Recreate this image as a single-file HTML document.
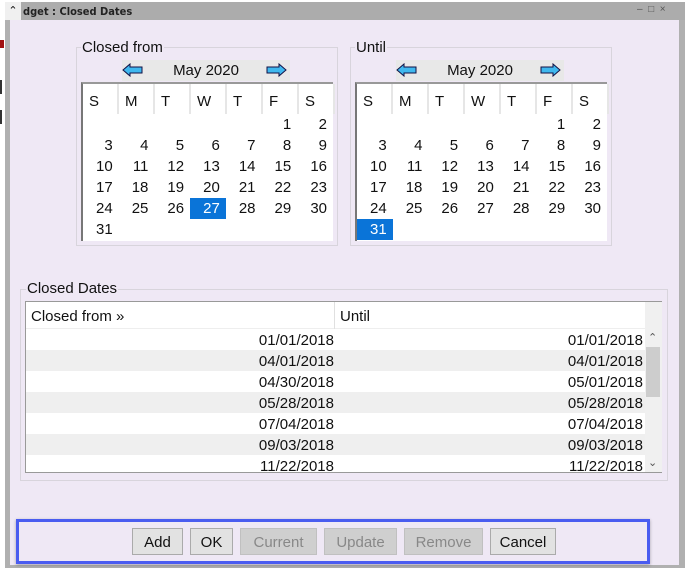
<!DOCTYPE html>
<html><head><style>
*{margin:0;padding:0;box-sizing:border-box}
body{width:687px;height:571px;background:#fff;position:relative;overflow:hidden;font-family:"Liberation Sans","DejaVu Sans",sans-serif;font-size:15px;color:#111}
.abs{position:absolute}
.win{left:5px;top:2px;width:680px;height:566px;background:#b0b0b0}
.body{left:10px;top:20px;width:669px;height:545px;background:#efe8f5}
.title{left:5px;top:2px;width:680px;height:18px;background:#acacac;font-size:11px;font-weight:bold;color:#222;padding:3px 0 0 18px;font-family:"DejaVu Sans Condensed","DejaVu Sans",sans-serif}
.fs{border:1px solid #d8d4dc}
.leg{background:#efe8f5;padding:0 1px;font-size:15px}
.grid{background:#fff;border-left:2px solid #777;border-top:2px solid #999}
.cal td{width:36px;height:21px;text-align:right;padding-right:6px;font-size:15px}
.hd div{position:absolute;top:0;height:30px;border-right:2px solid #e6e6e6;padding:9px 0 0 6px}
.nav{background:#e8e8e8;height:21px;text-align:center;padding-top:2px}
.btn{position:absolute;top:528px;height:27px;border:1px solid #aaa;background:#e2e2e2;text-align:center;padding-top:5px;font-size:15px}
.dis{background:#cfcfcf;color:#888;border-color:#c0c0c0}
.row{position:absolute;left:0;width:619px;height:21px}
.row span{position:absolute;top:3px}
</style></head><body>
<div class="abs" style="left:0;top:40px;width:4px;height:8px;background:#a01010"></div>
<div class="abs" style="left:0;top:80px;width:2px;height:14px;background:#333"></div>
<div class="abs" style="left:0;top:110px;width:2px;height:14px;background:#333"></div>
<div class="abs win"></div>
<div class="abs body"></div>
<div class="abs title">dget : Closed Dates</div>
<div class="abs" style="left:5px;top:2px;width:16px;height:18px;background:#f0f0f0;font-size:11px;text-align:center;padding-top:2px">&#8963;</div>
<div class="abs" style="left:637px;top:4px;font-size:10px;color:#555">&#8211;&nbsp;&nbsp;&#9633;&nbsp;&nbsp;×</div>

<!-- cal 1 -->
<div class="abs fs" style="left:76px;top:47px;width:262px;height:199px"></div>
<div class="abs leg" style="left:81px;top:39px">Closed from</div>
<div class="abs nav" style="left:122px;top:60px;width:168px">May 2020</div>
<svg class="abs" style="left:122px;top:63px" width="22" height="14"><path d="M1 7 L8 1 V4 H20 V10 H8 V13 Z" fill="#3fb8ee" stroke="#114" stroke-width="1"/></svg>
<svg class="abs" style="left:265px;top:63px" width="22" height="14"><path d="M21 7 L14 1 V4 H2 V10 H14 V13 Z" fill="#3fb8ee" stroke="#114" stroke-width="1"/></svg>
<div class="abs grid" style="left:81px;top:82px;width:252px;height:159px">
 <div class="hd" style="position:relative;height:30px"><div style="left:0;width:36px">S</div><div style="left:36px;width:36px">M</div><div style="left:72px;width:36px">T</div><div style="left:108px;width:36px">W</div><div style="left:144px;width:36px">T</div><div style="left:180px;width:36px">F</div><div style="left:216px;width:36px">S</div></div>
 <table class="cal" style="border-collapse:collapse;margin-top:0px">
 <tr><td></td><td></td><td></td><td></td><td></td><td>1</td><td>2</td></tr>
 <tr><td>3</td><td>4</td><td>5</td><td>6</td><td>7</td><td>8</td><td>9</td></tr>
 <tr><td>10</td><td>11</td><td>12</td><td>13</td><td>14</td><td>15</td><td>16</td></tr>
 <tr><td>17</td><td>18</td><td>19</td><td>20</td><td>21</td><td>22</td><td>23</td></tr>
 <tr><td>24</td><td>25</td><td>26</td><td style="background:#0a74d8;color:#fff">27</td><td>28</td><td>29</td><td>30</td></tr>
 <tr><td>31</td><td></td><td></td><td></td><td></td><td></td><td></td></tr>
 </table>
</div>

<!-- cal 2 -->
<div class="abs fs" style="left:350px;top:47px;width:262px;height:199px"></div>
<div class="abs leg" style="left:355px;top:39px">Until</div>
<div class="abs nav" style="left:396px;top:60px;width:168px">May 2020</div>
<svg class="abs" style="left:396px;top:63px" width="22" height="14"><path d="M1 7 L8 1 V4 H20 V10 H8 V13 Z" fill="#3fb8ee" stroke="#114" stroke-width="1"/></svg>
<svg class="abs" style="left:539px;top:63px" width="22" height="14"><path d="M21 7 L14 1 V4 H2 V10 H14 V13 Z" fill="#3fb8ee" stroke="#114" stroke-width="1"/></svg>
<div class="abs grid" style="left:355px;top:82px;width:252px;height:159px">
 <div class="hd" style="position:relative;height:30px"><div style="left:0;width:36px">S</div><div style="left:36px;width:36px">M</div><div style="left:72px;width:36px">T</div><div style="left:108px;width:36px">W</div><div style="left:144px;width:36px">T</div><div style="left:180px;width:36px">F</div><div style="left:216px;width:36px">S</div></div>
 <table class="cal" style="border-collapse:collapse;margin-top:0px">
 <tr><td></td><td></td><td></td><td></td><td></td><td>1</td><td>2</td></tr>
 <tr><td>3</td><td>4</td><td>5</td><td>6</td><td>7</td><td>8</td><td>9</td></tr>
 <tr><td>10</td><td>11</td><td>12</td><td>13</td><td>14</td><td>15</td><td>16</td></tr>
 <tr><td>17</td><td>18</td><td>19</td><td>20</td><td>21</td><td>22</td><td>23</td></tr>
 <tr><td>24</td><td>25</td><td>26</td><td>27</td><td>28</td><td>29</td><td>30</td></tr>
 <tr><td style="background:#0a74d8;color:#fff">31</td><td></td><td></td><td></td><td></td><td></td><td></td></tr>
 </table>
</div>

<!-- closed dates -->
<div class="abs fs" style="left:20px;top:289px;width:648px;height:192px"></div>
<div class="abs leg" style="left:26px;top:280px">Closed Dates</div>
<div class="abs" style="left:25px;top:301px;width:637px;height:172px;background:#fff;border:1px solid #999">
 <div class="abs" style="left:0;top:0;width:619px;height:27px;border-bottom:1px solid #eee"></div>
 <div class="abs" style="left:308px;top:0;width:1px;height:27px;background:#e0e0e0"></div>
 <div class="abs" style="left:5px;top:6px">Closed from »</div>
 <div class="abs" style="left:314px;top:6px">Until</div>
 <div class="abs" style="left:619px;top:0;width:17px;height:170px;background:#f0f0f0"></div>
 <div class="abs" style="left:620px;top:45px;width:14px;height:50px;background:#cdcdcd"></div>
 <div class="abs" style="left:622px;top:29px;font-size:11px;color:#555">&#8963;</div>
 <div class="abs" style="left:622px;top:154px;font-size:11px;color:#555">&#8964;</div>
 <div style="position:absolute;left:0;top:27px;width:619px;height:143px;overflow:hidden">
  <div class="row" style="top:0;background:#fff"><span style="right:311px">01/01/2018</span><span style="right:2px">01/01/2018</span></div>
  <div class="row" style="top:21px;background:#efefef"><span style="right:311px">04/01/2018</span><span style="right:2px">04/01/2018</span></div>
  <div class="row" style="top:42px;background:#fff"><span style="right:311px">04/30/2018</span><span style="right:2px">05/01/2018</span></div>
  <div class="row" style="top:63px;background:#efefef"><span style="right:311px">05/28/2018</span><span style="right:2px">05/28/2018</span></div>
  <div class="row" style="top:84px;background:#fff"><span style="right:311px">07/04/2018</span><span style="right:2px">07/04/2018</span></div>
  <div class="row" style="top:105px;background:#efefef"><span style="right:311px">09/03/2018</span><span style="right:2px">09/03/2018</span></div>
  <div class="row" style="top:126px;background:#fff"><span style="right:311px">11/22/2018</span><span style="right:2px">11/22/2018</span></div>
 </div>
</div>

<!-- buttons -->
<div class="abs" style="left:16px;top:519px;width:634px;height:45px;border:3px solid #4a5cf0;box-shadow:0 1px 3px rgba(0,0,0,.3)"></div>
<div class="btn" style="left:132px;width:51px">Add</div>
<div class="btn" style="left:190px;width:43px">OK</div>
<div class="btn dis" style="left:240px;width:77px">Current</div>
<div class="btn dis" style="left:324px;width:73px">Update</div>
<div class="btn dis" style="left:404px;width:79px">Remove</div>
<div class="btn" style="left:490px;width:66px">Cancel</div>
</body></html>
